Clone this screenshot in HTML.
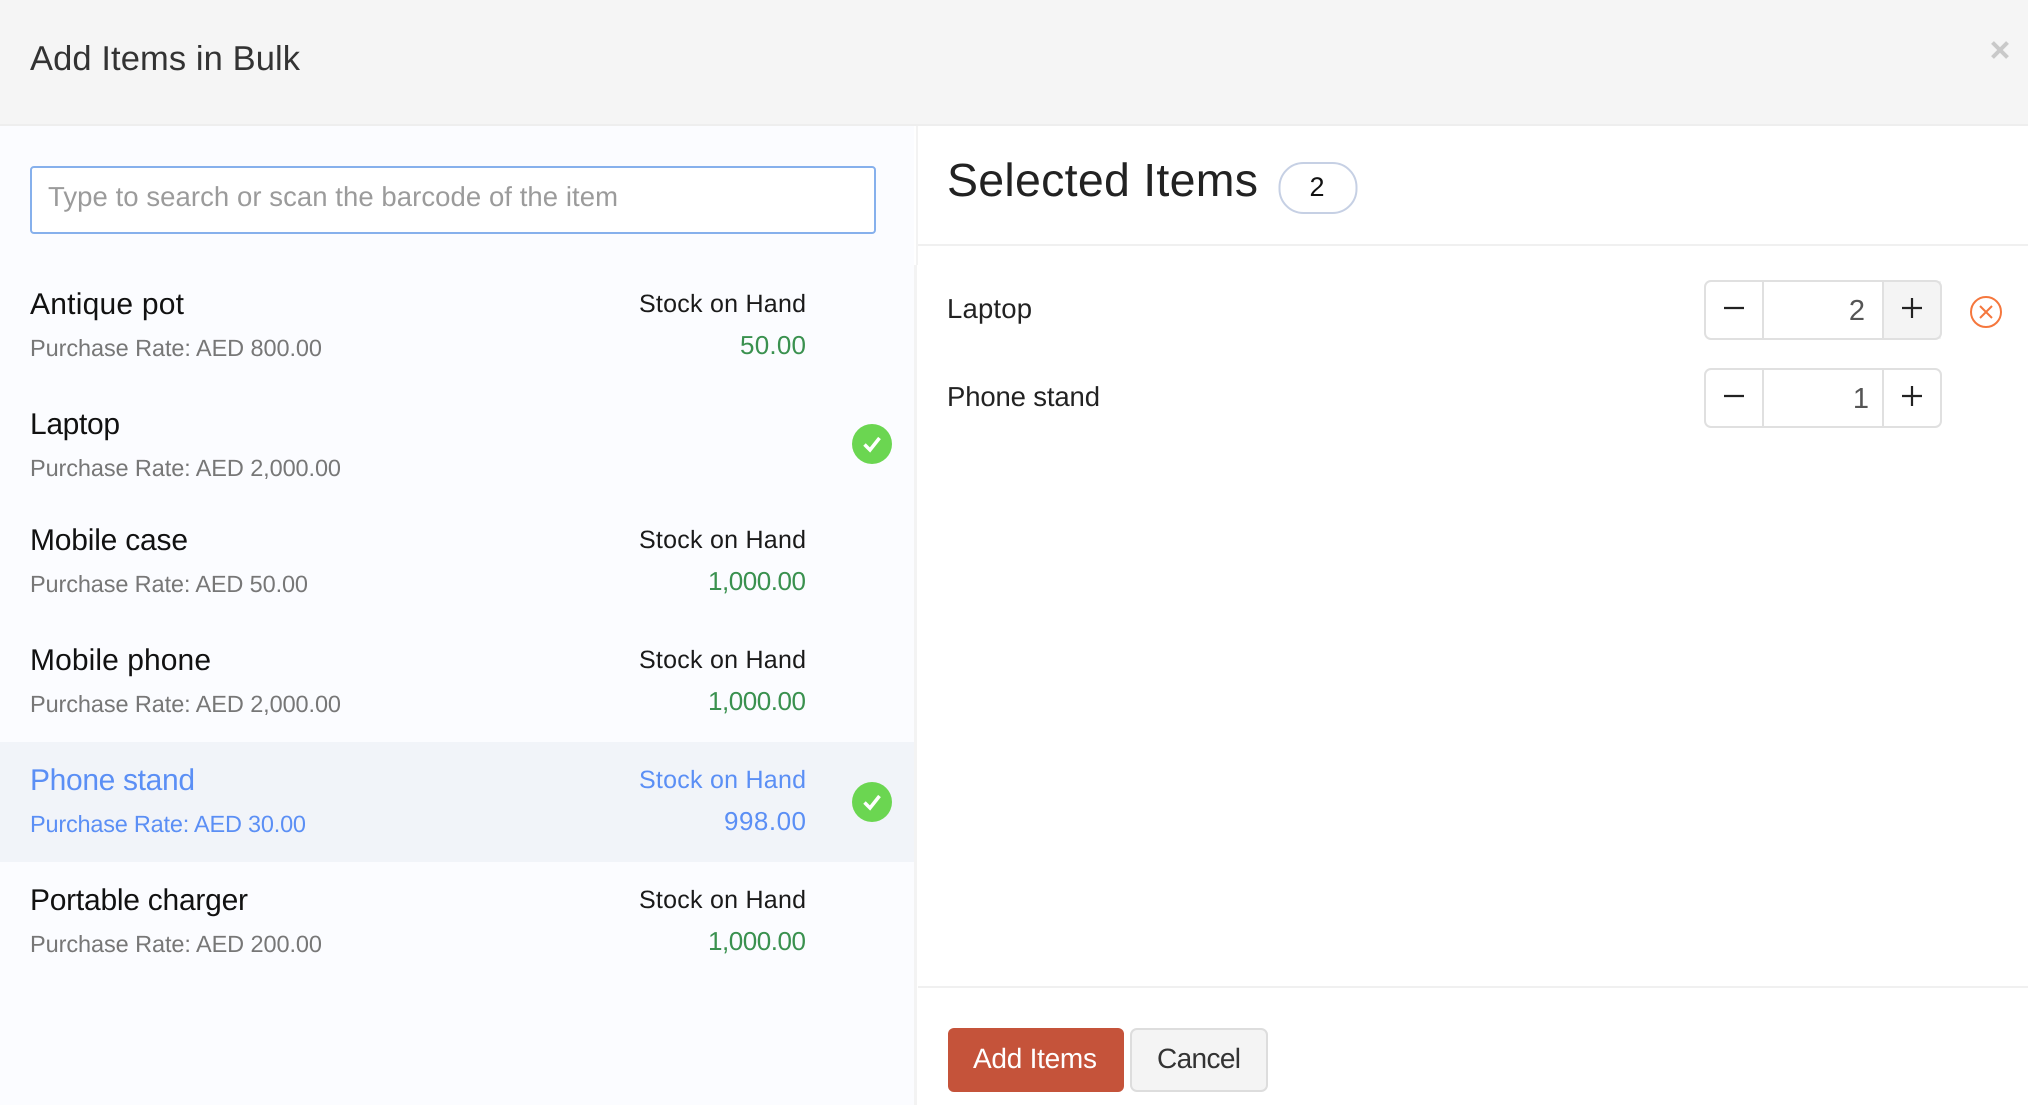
<!DOCTYPE html>
<html lang="en"><head><meta charset="utf-8"><title>Add Items in Bulk</title>
<style>
html,body{margin:0;padding:0;background:#fff;width:2028px;height:1116px;overflow:hidden}
svg{display:block}
text{font-family:"Liberation Sans",sans-serif;text-rendering:geometricPrecision}
.n{font-size:30px;fill:#111}
.p{font-size:23.500px;fill:#777}
.s{font-size:25px;fill:#1a1a1a}
.q{font-size:26px;fill:#3a914f}
.b{fill:#5b8ff5}
</style></head><body>
<svg width="2028" height="1116" viewBox="0 0 2028 1116" xmlns="http://www.w3.org/2000/svg">
<rect width="2028" height="1116" fill="#fff"/>
<!-- header -->
<rect width="2028" height="125" fill="#f5f5f5"/>
<rect y="124" width="2028" height="2" fill="#eeeeee"/>
<text x="30" y="70" font-size="34.500" fill="#333" textLength="270">Add Items in Bulk</text>
<path d="M1992.500 42.500L2007.500 57.500M2007.500 42.500L1992.500 57.500" stroke="#c9c9c9" stroke-width="4" fill="none"/>
<!-- left panel -->
<rect y="126" width="914" height="979" fill="#fbfcff"/>
<rect x="914" y="265" width="3" height="840" fill="#f3f3f3"/>
<rect x="916" y="126" width="2" height="139" fill="#f3f3f3"/>
<rect x="31" y="167" width="844" height="66" rx="3" fill="#fff" stroke="#86b0ec" stroke-width="2"/>
<text x="48" y="206" font-size="27.500" fill="#9b9b9b" textLength="570">Type to search or scan the barcode of the item</text>

<text class="n" x="30" y="314" textLength="154">Antique pot</text>
<text class="p" x="30" y="356" textLength="292">Purchase Rate: AED 800.00</text>
<text class="s" x="806" y="312" text-anchor="end" textLength="167">Stock on Hand</text>
<text class="q" x="806" y="354" text-anchor="end" textLength="66">50.00</text>

<text class="n" x="30" y="434" textLength="90">Laptop</text>
<text class="p" x="30" y="476" textLength="311">Purchase Rate: AED 2,000.00</text>
<circle cx="872" cy="444" r="20" fill="#6bd651"/>
<path d="M864.500 444.500L870 450L879.500 438" stroke="#fff" stroke-width="3.500" fill="none"/>

<text class="n" x="30" y="550" textLength="158">Mobile case</text>
<text class="p" x="30" y="592" textLength="278">Purchase Rate: AED 50.00</text>
<text class="s" x="806" y="548" text-anchor="end" textLength="167">Stock on Hand</text>
<text class="q" x="806" y="590" text-anchor="end" textLength="98">1,000.00</text>

<text class="n" x="30" y="670" textLength="181">Mobile phone</text>
<text class="p" x="30" y="712" textLength="311">Purchase Rate: AED 2,000.00</text>
<text class="s" x="806" y="668" text-anchor="end" textLength="167">Stock on Hand</text>
<text class="q" x="806" y="710" text-anchor="end" textLength="98">1,000.00</text>

<rect y="742" width="914" height="120" fill="#f1f4f9"/>
<text class="n b" x="30" y="790" textLength="165">Phone stand</text>
<text class="p b" x="30" y="832" textLength="276">Purchase Rate: AED 30.00</text>
<text class="s b" x="806" y="788" text-anchor="end" textLength="167">Stock on Hand</text>
<text class="q b" x="806" y="830" text-anchor="end" textLength="82">998.00</text>
<circle cx="872" cy="802" r="20" fill="#6bd651"/>
<path d="M864.500 802.500L870 808L879.500 796" stroke="#fff" stroke-width="3.500" fill="none"/>

<text class="n" x="30" y="910" textLength="218">Portable charger</text>
<text class="p" x="30" y="952" textLength="292">Purchase Rate: AED 200.00</text>
<text class="s" x="806" y="908" text-anchor="end" textLength="167">Stock on Hand</text>
<text class="q" x="806" y="950" text-anchor="end" textLength="98">1,000.00</text>

<!-- right panel -->
<text x="947" y="196" font-size="46.500" fill="#222" textLength="311">Selected Items</text>
<rect x="1279.500" y="163" width="77" height="50" rx="24" fill="#fff" stroke="#c6d0e4" stroke-width="2"/>
<text x="1317" y="196" font-size="27" fill="#111" text-anchor="middle">2</text>
<rect x="918" y="244" width="1110" height="2" fill="#f0f0f0"/>

<text x="947" y="318" font-size="27.500" fill="#222" textLength="85">Laptop</text>
<text x="947" y="406" font-size="27.500" fill="#222" textLength="153">Phone stand</text>

<rect x="1883" y="281" width="58" height="58" fill="#f4f4f4"/>
<rect x="1705" y="281" width="236" height="58" rx="6" fill="none" stroke="#e0e0e0" stroke-width="2"/>
<path d="M1763 281V339M1883 281V339" stroke="#e0e0e0" stroke-width="2"/>
<path d="M1724 308H1744M1902 308H1922M1912 298V318" stroke="#222" stroke-width="2.200"/>
<text x="1865" y="320" font-size="29" fill="#555" text-anchor="end">2</text>

<rect x="1705" y="369" width="236" height="58" rx="6" fill="none" stroke="#e0e0e0" stroke-width="2"/>
<path d="M1763 369V427M1883 369V427" stroke="#e0e0e0" stroke-width="2"/>
<path d="M1724 396H1744M1902 396H1922M1912 386V406" stroke="#222" stroke-width="2.200"/>
<text x="1869" y="408" font-size="29" fill="#555" text-anchor="end">1</text>

<circle cx="1986" cy="312" r="15" fill="none" stroke="#f5773d" stroke-width="2"/>
<path d="M1980 306L1992 318M1992 306L1980 318" stroke="#f5773d" stroke-width="2"/>

<rect x="918" y="986" width="1110" height="2" fill="#f0f0f0"/>
<rect x="948" y="1028" width="176" height="64" rx="6" fill="#c5533a"/>
<text x="973" y="1068" font-size="28" fill="#fff" textLength="124">Add Items</text>
<rect x="1131" y="1029" width="136" height="62" rx="6" fill="#f4f4f4" stroke="#dddddd" stroke-width="2"/>
<text x="1157" y="1068" font-size="28" fill="#333" textLength="84">Cancel</text>
</svg>
</body></html>
